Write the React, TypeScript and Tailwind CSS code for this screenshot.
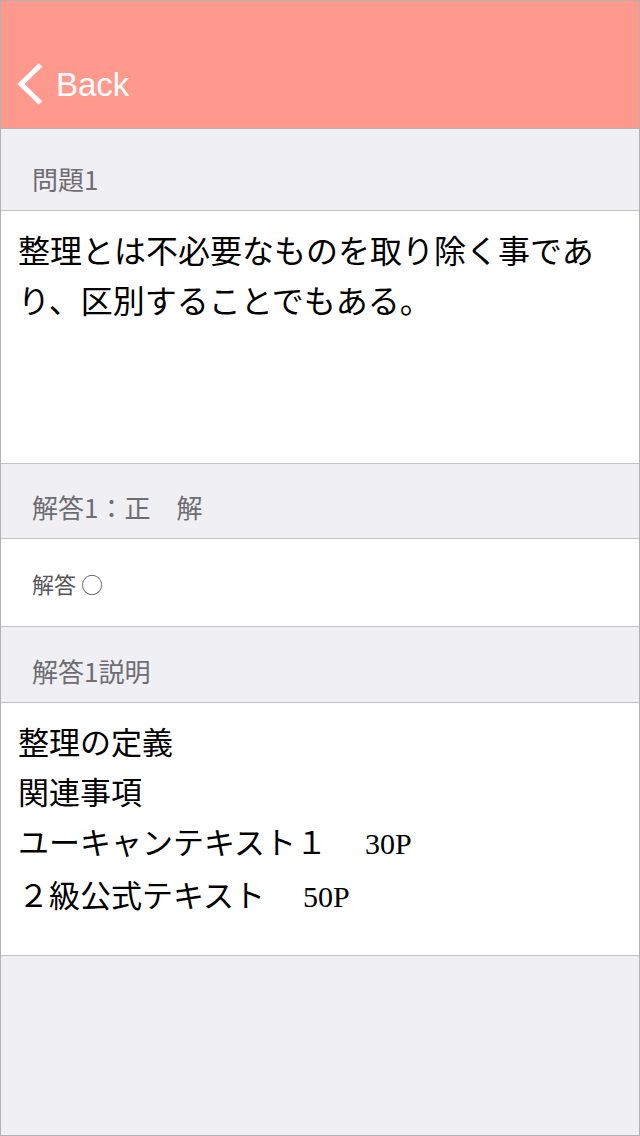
import React from "react";

const jp = "font-['Noto_Sans_CJK_JP','Noto_Sans',sans-serif]";
const serif = "font-['Liberation_Serif','Times_New_Roman',serif] text-[30px]";

const SectionHeader = ({ title, height }: { title: string; height: string }) => (
    <div
        className={`${height} flex items-end bg-[#efeff4] border-b border-[#c4c4c8] px-[31px] pb-[18px]`}
    >
        <span className={`${jp} text-[26px] leading-[26px] text-[#6d6d72]`}>{title}</span>
    </div>
);

const App = () => {
    return (
        <div className="w-[640px] h-[1136px] border border-[#b3b3b3] bg-[#efeff4] flex flex-col overflow-hidden">
            {/* nav bar */}
            <div className="h-[128px] shrink-0 bg-[#ff998d] border-b border-[#b4b4b4] flex items-end pb-[23px] pl-[15px]">
                <svg width="28" height="42" viewBox="0 0 28 42" className="mr-[12px]">
                    <path
                        d="M24.5 2 L5 21 L24.5 40"
                        fill="none"
                        stroke="#ffffff"
                        strokeWidth="5"
                        strokeLinecap="butt"
                        strokeLinejoin="miter"
                    />
                </svg>
                <span className="font-['Liberation_Sans',Arial,sans-serif] text-[33px] leading-[40px] text-white">
                    Back
                </span>
            </div>

            <SectionHeader title="問題1" height="h-[82px]" />
            <div className="h-[253px] shrink-0 bg-white border-b border-[#c4c4c8] px-[17px] pt-[13px]">
                <p className={`${jp} text-[32px] leading-[50px] text-black`}>
                    整理とは不必要なものを取り除く事であり、区別することでもある。
                </p>
            </div>

            <SectionHeader title={"解答1：正\u3000解"} height="h-[75px]" />
            <div className="h-[88px] shrink-0 bg-white border-b border-[#c4c4c8] px-[31px] flex items-center">
                <span className={`${jp} text-[22px] leading-[24px] text-[#555555]`}>解答 ○</span>
            </div>

            <SectionHeader title="解答1説明" height="h-[76px]" />
            <div className="h-[253px] shrink-0 bg-white border-b border-[#c4c4c8] px-[17px] pt-[13px]">
                <div className={`${jp} text-[31px] leading-[50px] text-black`}>
                    <p>整理の定義</p>
                    <p>関連事項</p>
                    <p>
                        {"ユーキャンテキスト１\u3000 "}
                        <span className={serif}>30P</span>
                    </p>
                    <p>
                        {"２級公式テキスト\u3000 "}
                        <span className={serif}>50P</span>
                    </p>
                </div>
            </div>

            <div className="flex-1 bg-[#efeff4]" />
        </div>
    );
};

export default App;
